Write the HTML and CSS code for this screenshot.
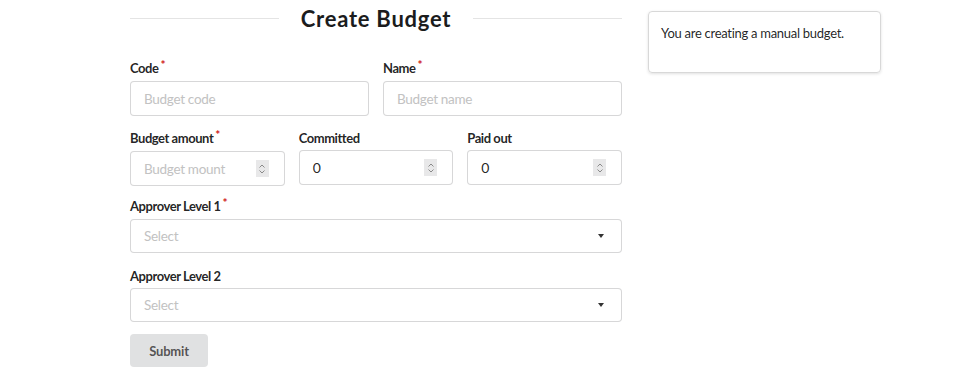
FILE: index.html
```html
<!DOCTYPE html>
<html>
<head>
<meta charset="utf-8">
<link rel="stylesheet" href="styles.css">
</head>
<body>
<div class="page">
  <div class="form">
    <div class="header"><span class="rule"></span><h2 class="title">Create Budget</h2><span class="rule"></span></div>
    <div class="row two">
      <div class="field">
        <label class="lbl req">Code</label>
        <div class="input"><span class="ph">Budget code</span></div>
      </div>
      <div class="field">
        <label class="lbl req">Name</label>
        <div class="input"><span class="ph">Budget name</span></div>
      </div>
    </div>
    <div class="row three">
      <div class="field">
        <label class="lbl req">Budget amount</label>
        <div class="input"><span class="ph">Budget mount</span><span class="spin"><svg width="8" height="12" viewBox="0 0 8 12"><path d="M1.5 4.5 L4 2 L6.5 4.5 M1.5 7.5 L4 10 L6.5 7.5" fill="none" stroke="#8a8a8a" stroke-width="1"/></svg></span></div>
      </div>
      <div class="field">
        <label class="lbl">Committed</label>
        <div class="input"><span class="val">0</span><span class="spin"><svg width="8" height="12" viewBox="0 0 8 12"><path d="M1.5 4.5 L4 2 L6.5 4.5 M1.5 7.5 L4 10 L6.5 7.5" fill="none" stroke="#8a8a8a" stroke-width="1"/></svg></span></div>
      </div>
      <div class="field">
        <label class="lbl">Paid out</label>
        <div class="input"><span class="val">0</span><span class="spin"><svg width="8" height="12" viewBox="0 0 8 12"><path d="M1.5 4.5 L4 2 L6.5 4.5 M1.5 7.5 L4 10 L6.5 7.5" fill="none" stroke="#8a8a8a" stroke-width="1"/></svg></span></div>
      </div>
    </div>
    <div class="field sel-field">
      <label class="lbl req">Approver Level 1</label>
      <div class="input select"><span class="ph">Select</span><span class="caret"></span></div>
    </div>
    <div class="field sel-field">
      <label class="lbl">Approver Level 2</label>
      <div class="input select"><span class="ph">Select</span><span class="caret"></span></div>
    </div>
    <button class="submit">Submit</button>
  </div>
  <div class="side">
    <div class="card">You are creating a manual budget.</div>
  </div>
</div>
</body>
</html>
```
FILE: styles.css
```css
* { box-sizing: border-box; }
body {
  margin: 0;
  font-family: Lato, "Open Sans", sans-serif;
  color: rgba(0,0,0,0.87);
  background: #fff;
}
.page {
  display: flex;
  align-items: flex-start;
  padding-left: 130px;
  gap: 26px;
}
.form {
  width: 492px;
  display: flex;
  flex-direction: column;
}
.header {
  display: flex;
  align-items: center;
  gap: 22px;
  margin-top: 5px;
  margin-bottom: 27px;
  height: 28px;
}
.rule {
  flex: 1;
  height: 1px;
  background: #e4e4e4;
  margin-top: -2px;
}
.title {
  margin: 0;
  font-size: 22px;
  line-height: 28px;
  font-weight: 700;
  letter-spacing: 0.75px;
  color: #1b1c1d;
}
.row {
  display: grid;
  gap: 14px;
}
.row.two { grid-template-columns: 1fr 1fr; }
.row.three { grid-template-columns: 1fr 1fr 1fr; }
.row.three .field { margin-bottom: 12px; }
.field {
  display: flex;
  flex-direction: column;
  margin-bottom: 14px;
}
.sel-field { margin-bottom: 15px; }
.lbl {
  font-size: 13px;
  font-weight: 700;
  line-height: 16px;
  margin-bottom: 4px;
  letter-spacing: -0.45px;
  color: rgba(0,0,0,0.87);
}
.lbl.req::after {
  content: "*";
  color: #d01919;
  margin-left: 2px;
  font-size: 12px;
  position: relative;
  top: -4px;
}
.input {
  height: 35px;
  border: 1px solid rgba(34,36,38,0.18);
  border-radius: 4px;
  display: flex;
  align-items: center;
  justify-content: space-between;
  padding: 0 14px 0 13px;
  font-size: 13.5px;
  letter-spacing: -0.3px;
  background: #fff;
}
.ph { color: #c2c2c2; }
.val { color: rgba(0,0,0,0.87); font-size: 14px; }
.spin {
  width: 13px;
  height: 17px;
  background: #e8e8e9;
  display: flex;
  align-items: center;
  justify-content: center;
  margin-right: 1px;
}
.select { height: 34px; }
.caret {
  width: 0;
  height: 0;
  border-left: 3.5px solid transparent;
  border-right: 3.5px solid transparent;
  border-top: 4px solid rgba(0,0,0,0.8);
  margin-right: 3px;
}
.submit {
  align-self: flex-start;
  margin-top: -3px;
  width: 78px;
  height: 33px;
  border: none;
  border-radius: 4px;
  background: #e0e1e2;
  color: rgba(0,0,0,0.65);
  font-family: Lato, sans-serif;
  font-weight: 700;
  font-size: 13px;
  letter-spacing: -0.2px;
  padding: 0;
}
.side { width: 233px; margin-top: 11px; }
.card {
  min-height: 62px;
  border: 1px solid #d8d8d8;
  border-radius: 4px;
  box-shadow: 0 1px 3px rgba(0,0,0,0.12);
  padding: 11px 12px;
  font-size: 13px;
  line-height: 20px;
  letter-spacing: -0.28px;
  color: rgba(0,0,0,0.87);
}
```
